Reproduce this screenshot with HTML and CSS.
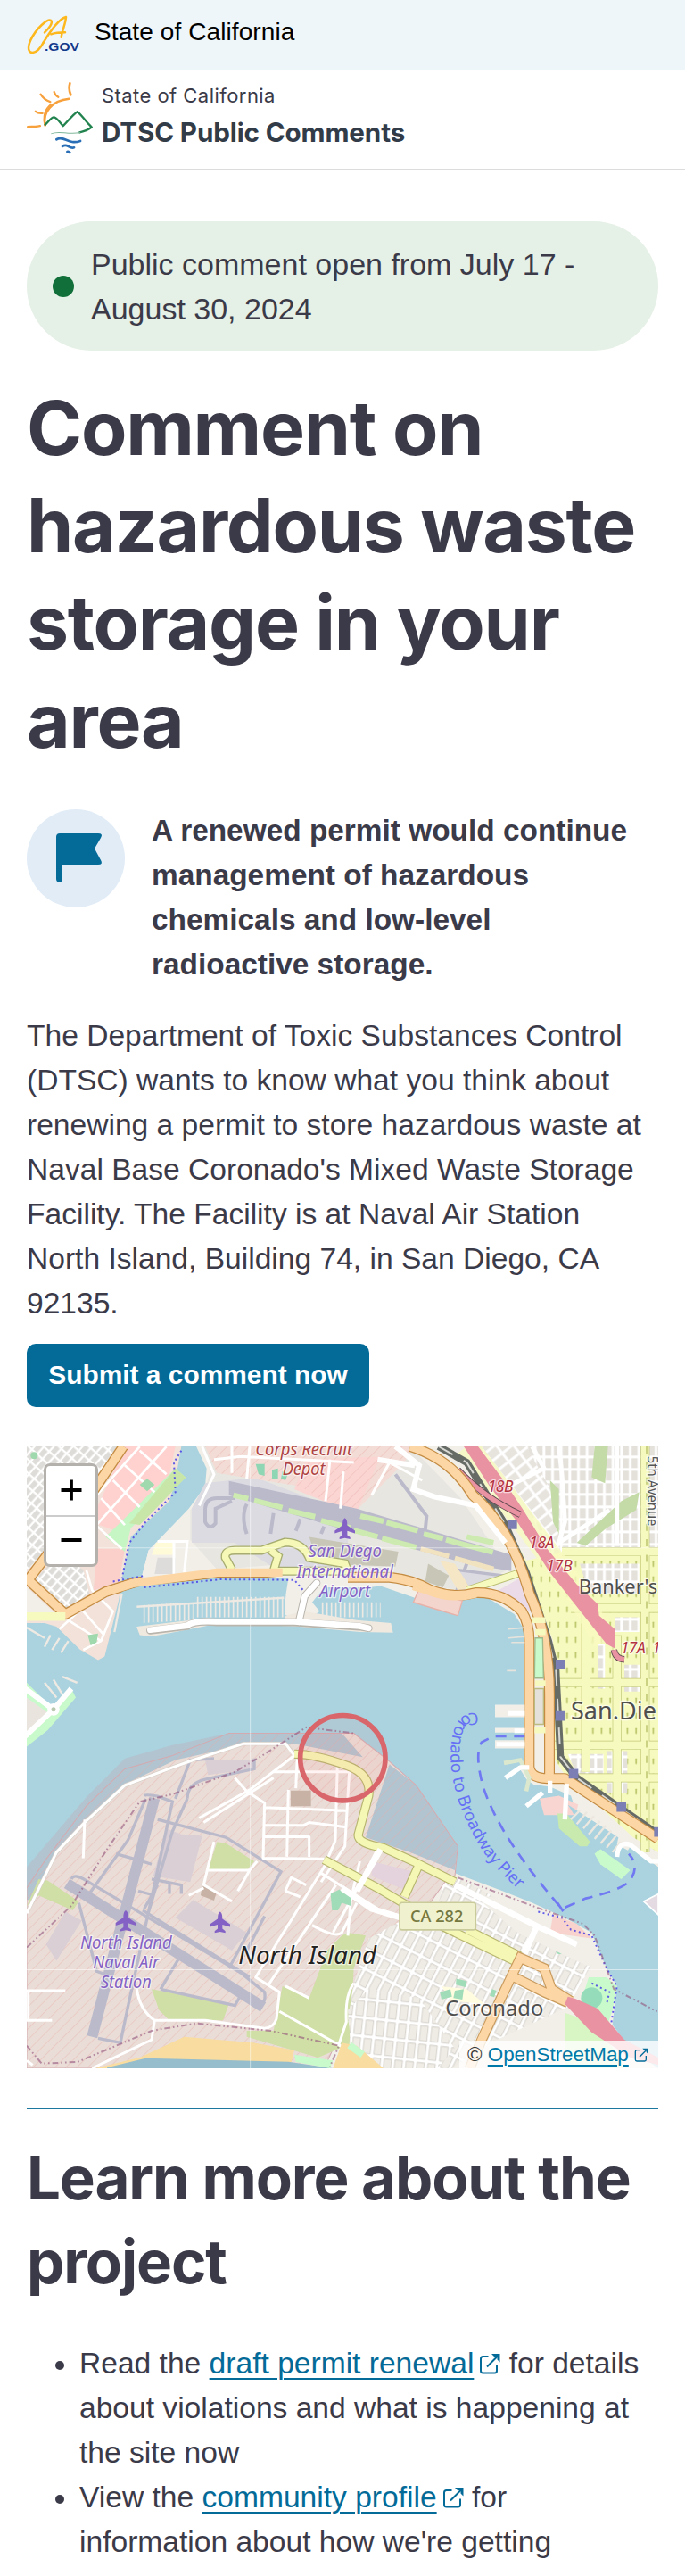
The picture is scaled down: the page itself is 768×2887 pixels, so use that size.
FILE: index.html
```html
<!DOCTYPE html>
<html lang="en">
<head>
<meta charset="utf-8">
<title>DTSC Public Comments</title>
<link rel="stylesheet" href="styles.css">
</head>
<body>
<svg class="defs" width="0" height="0" aria-hidden="true">
  <symbol id="ext" viewBox="0 0 24 24">
    <path d="M10.500 4H4.500Q2 4 2 6.500V20Q2 22.500 4.500 22.500H17.500Q20 22.500 20 20V13.500M9 15.500L21 3.500" fill="none" stroke="currentColor" stroke-width="2"/>
    <path d="M14 1H23.500V10.500L20.500 7.500V4H17Z" fill="currentColor"/>
  </symbol>
</svg>
<div class="state-bar">
  <svg class="ca-logo" viewBox="90 45 180 138" aria-label="CA.gov">
    <g fill="none" stroke="#fdb81e" stroke-width="7.500" stroke-linecap="round" stroke-linejoin="round">
      <path d="M150 106C166 92 178 74 172 66C160 58 122 92 103 132C92 156 94 174 110 174C126 173 138 155 146 140"/>
      <path d="M146 140C170 100 200 60 222 54C221 75 210 96 206 122M172 112C186 107 204 106 219 106"/>
    </g>
    <text x="150" y="167" class="gov" textLength="117" lengthAdjust="spacingAndGlyphs">.GOV</text>
  </svg>
  <span>State of California</span>
</div>
<header class="site-header">
  <svg class="site-logo" viewBox="88 280 226 245" aria-hidden="true">
    <g fill="none" stroke="#f7a13d" stroke-linecap="round">
      <path d="M152 425C142 380 175 342 232 336" stroke-width="8"/>
      <path d="M152 425C144 396 152 370 172 354" stroke-width="5"/>
      <path d="M235 284C231 298 232 310 238 323" stroke-width="8"/>
      <path d="M182 313C184 320 188 326 196 330M137 321C145 334 154 342 169 346M120 378C128 385 134 385 143 384" stroke-width="7"/>
      <path d="M94 430C110 427 120 432 135 427" stroke-width="7"/>
    </g>
    <path d="M150 425C165 412 173 395 183 398C194 402 203 417 212 427C226 414 245 388 260 379C278 394 290 415 308 431C296 440 283 445 265 449" fill="none" stroke="#22834f" stroke-width="7" stroke-linejoin="round"/>
    <path d="M172 453C200 440 225 458 270 449" fill="none" stroke="#7fb79a" stroke-width="3"/>
    <g fill="none" stroke="#2a6fb5" stroke-width="8" stroke-linecap="round">
      <path d="M190 472C215 457 230 492 270 477"/>
      <path d="M210 495C226 482 232 505 249 499"/>
      <path d="M226 513C232 511 232 516 235 516"/>
    </g>
  </svg>
  <div class="site-name"><span class="site-state">State of California</span><strong>DTSC Public Comments</strong></div>
</header>
<main>
  <div class="status"><i class="dot"></i><span>Public comment open from July 17 -<br>August 30, 2024</span></div>
  <h1>Comment on hazardous waste storage in your area</h1>
  <div class="callout">
    <svg class="flag" viewBox="0 0 110 110" aria-hidden="true">
      <circle cx="55" cy="55" r="55" fill="#e1ecf7"/>
      <path d="M33 31Q33 27 37 27H80Q86 27 83 32L76 44L83 57Q86 62 80 62H40V78Q40 81.500 36.500 81.500Q33 81.500 33 78Z" fill="#046b99"/>
    </svg>
    <p>A renewed permit would continue management of hazardous chemicals and low-level radioactive storage.</p>
  </div>
  <p class="intro">The Department of Toxic Substances Control (DTSC) wants to know what you think about renewing a permit to store hazardous waste at Naval Base Coronado's Mixed Waste Storage Facility. The Facility is at Naval Air Station North Island, Building 74, in San Diego, CA 92135.</p>
  <a class="button">Submit a comment now</a>
  <div class="map">
    <svg class="map-art" viewBox="0 6 2124 2090" preserveAspectRatio="none" aria-label="Map of San Diego Bay">
      <defs>
        <pattern id="blocks" width="34" height="24" patternUnits="userSpaceOnUse" patternTransform="rotate(-48)"><rect width="34" height="24" fill="#fff"/><rect x="3" y="3" width="27" height="17" fill="#dedcd8"/></pattern>
        <pattern id="hill" width="29" height="42" patternUnits="userSpaceOnUse"><rect width="29" height="42" fill="#fff"/><rect x="4" y="4" width="20" height="33" fill="#e4e0da"/></pattern>
        <pattern id="hill2" width="36" height="46" patternUnits="userSpaceOnUse" patternTransform="rotate(52)"><rect width="36" height="46" fill="#fff"/><rect x="4" y="4" width="27" height="37" fill="#e7e3dd"/></pattern>
        <pattern id="down" width="29" height="51" patternUnits="userSpaceOnUse" patternTransform="translate(10 18)"><rect width="29" height="51" fill="#f7fabf"/><rect x="7" y="16" width="5" height="20" rx="2" fill="#b9c467"/></pattern>
        <pattern id="cor" width="37" height="62" patternUnits="userSpaceOnUse" patternTransform="rotate(27)"><rect width="37" height="62" fill="#fff"/><rect x="4" y="4" width="28" height="53" rx="3" fill="#d6d2cc"/><rect x="7" y="7" width="22" height="47" fill="#efebe5"/></pattern>
        <pattern id="cor2" width="37" height="62" patternUnits="userSpaceOnUse" patternTransform="rotate(6)"><rect width="37" height="62" fill="#fff"/><rect x="4" y="4" width="28" height="53" rx="3" fill="#d6d2cc"/><rect x="7" y="7" width="22" height="47" fill="#efebe5"/></pattern>
        <pattern id="hatch" width="26" height="26" patternUnits="userSpaceOnUse" patternTransform="rotate(45)"><path d="M13 0V26" stroke="#e8a9a4" stroke-width="3" opacity=".38"/></pattern>
        <pattern id="slips" width="15" height="60" patternUnits="userSpaceOnUse"><path d="M5 0V60" stroke="#eee9e2" stroke-width="5"/></pattern>
      </defs>
      <rect y="6" width="2124" height="2090" fill="#aad3df"/>

      <path d="M0 6H520L500 120L480 190L350 310L320 450L310 520L262 712L240 724L180 690L100 612L60 600H0Z" fill="#f2e2d9"/>
      <path d="M0 6H310L215 180L130 330L0 420Z" fill="url(#blocks)"/>
      <path d="M20 460L110 370L190 420L210 500L130 560Z" fill="url(#blocks)"/>
      <path d="M0 480L110 580H0Z" fill="#f2efe9"/>
      <path d="M330 6H500L480 100L300 290L215 260Z" fill="#ffd2d0"/>
      <path d="M235 350L330 350L310 460L225 490Z" fill="#fbcfca"/>
      <path d="M500 80L535 110L350 280L330 360L265 310Z" fill="#c6f6c4"/>
      <path d="M500 80L535 110L430 220L380 270L345 265Z" fill="#c8e6a8"/>
      <g fill="none" stroke="#fff" stroke-width="8"><path d="M470 6L235 270M380 6L200 210M250 180L330 270M290 120L380 210M330 70L430 160M380 20L470 100M210 250L320 350M200 420L220 490L290 560L250 660L190 690M110 620L240 500M140 590L250 660M190 560L260 640"/></g>
      <g fill="#a0d9ae"><path d="M380 135l25-20 25 20-25 22zM205 640l35-5-5 30-20 10z"/><circle cx="25" cy="37" r="12"/></g>
      <g fill="none" stroke-linejoin="round"><path d="M325 6L160 250L5 455L130 570L265 495L360 465L640 430H1080" stroke="#c48c43" stroke-width="36"/><path d="M325 6L160 250L5 455L130 570L265 495L360 465L640 430H1080" stroke="#fcd6a4" stroke-width="28"/><path d="M0 578H130" stroke="#f7fabf" stroke-width="28"/></g>

      <path d="M570 6L605 80L600 140L545 215L410 355L385 452L640 430L880 450L872 500L865 570L930 600L985 560L960 530L1000 480H1150L1190 475L1320 520L1550 515L1640 570L1685 640V1100L1605 1070L1715 1150L1780 1170L1860 1270L1960 1330L2124 1420V6Z" fill="#f2efe9"/>
      <path d="M365 600L420 588L530 590L600 575H870L930 560L1110 590L1225 600L1232 632L1120 630L900 610L640 602L540 622L420 645L380 640Z" fill="#efe9e0"/>
      <path d="M590 6H1290L1460 180L1620 420L1480 490L1180 460L880 400L640 420L550 320L550 220L600 150L620 80Z" fill="#e8e6e1"/>
      <path d="M600 130L770 110L1080 230V420H840L700 330H555V215Z" fill="#dcdbe2"/>
      <path d="M600 6H1300L1270 60L1090 240L920 140L640 95Z" fill="#f3dcd5"/>
      <path d="M940 50L1190 40L1110 225L1060 215L900 150Z" fill="#fad5d2"/>
      <path d="M600 6H1300L1270 60L1090 240L920 140L640 95Z" fill="url(#hatch)"/>
      <path d="M770 65h30v40l-20-5zM825 85l20-5v35h-20zM860 90l20 5-10 25-15-5z" fill="#8fd6b5"/>
      <path d="M680 122L1110 215L1630 370V425L1480 400L1080 290L680 170Z" fill="#bbbacb"/>
      <g fill="none" stroke="#bbbacb" stroke-width="12"><path d="M700 180H640Q600 180 600 220V260Q615 290 635 265V215L690 190M740 200Q720 240 740 300M830 230L820 300M920 250L905 290M1000 275L990 300M1240 100L1345 240L1340 290M1480 400L1440 510"/></g>
      <path d="M1440 420L1500 500L1600 440Z" fill="#dcdbe2" stroke="#bbbacb" stroke-width="10"/>
      <g stroke="#cdebb0" stroke-width="18"><path d="M695 170L745 182M765 188L860 212M880 222L970 242M990 255L1090 280M1122 240L1200 258M1210 262L1315 290M1335 300L1400 316M1410 320L1568 362M1100 288L1180 310M1195 315L1310 345M1480 310L1570 330"/></g>
      <path d="M1325 350L1420 375M1440 382L1570 418" stroke="#f2e3c0" stroke-width="16"/>
      <path d="M950 310L1250 360L1240 410L980 400ZM1350 400L1420 440L1400 480L1340 460Z" fill="#c8c7b7"/>
      <path d="M1390 390L1440 400L1490 480L1450 490Z" fill="#f5e6c5"/>
      <path d="M690 420L668 380Q665 355 700 355H790L870 328Q930 330 950 380L1070 400L1080 425H830L845 375L820 355" fill="none" stroke="#a7ad70" stroke-width="30"/><path d="M690 420L668 380Q665 355 700 355H790L870 328Q930 330 950 380L1070 400L1080 425H830L845 375L820 355" fill="none" stroke="#f5f8b6" stroke-width="22"/>
      <path d="M400 480L385 450L410 355L440 325H540L520 430Z" fill="#f2efe9"/><path d="M435 330h60v40h-75z" fill="#fffbd8"/><path d="M440 380h60v55h-70z" fill="#dddcda"/>
      <g fill="none" stroke="#fff" stroke-width="9"><path d="M440 325H540L530 430M495 330V435M590 6L630 100L580 205M630 50L720 40L1100 60M690 6V95M750 6L740 115M1020 50L1005 190M1065 90L1055 215M1160 170L1220 60L1330 120"/></g>
      <path d="M385 475L640 450H850L870 480V600L550 590L380 610L320 620V495Z" fill="#aad3df"/>
      <path d="M265 495L360 465L640 430H860" fill="none" stroke="#fcd6a4" stroke-width="28"/>
      <path d="M385 540L560 530V590L385 600ZM570 512H865V580H570Z" fill="url(#slips)"/><path d="M985 530H1190V580H985Z" fill="url(#slips)"/>
      <g fill="none" stroke="#eee9e2" stroke-width="7"><path d="M320 500L295 630M0 615L60 650M80 640L60 680M110 650L85 690M140 660L115 700M370 545L865 515M60 800L100 850M90 790L120 840M120 780L170 800"/></g>
      <g fill="none" stroke="#b9b5ad" stroke-width="26" stroke-linecap="round"><path d="M415 625L540 610Q560 590 640 597H900L1120 612L1150 617M915 597L935 510L975 465"/></g>
      <g fill="none" stroke="#fff" stroke-width="20" stroke-linecap="round"><path d="M415 623L540 608Q560 590 640 595H900L1120 610L1150 617M915 597L935 510L975 465"/></g>

      <path d="M0 800L90 890L150 820L165 850L70 960L0 1015Z" fill="#c8facc"/><path d="M0 850L70 900L0 970Z" fill="#e9e5de"/><path d="M-5 820L90 890L150 820M90 890L-5 980" fill="none" stroke="#fff" stroke-width="18"/><circle cx="90" cy="890" r="14" fill="#b8c9b0" stroke="#fff" stroke-width="13"/>

      <path d="M1500 6H2124V520H1850L1620 100Z" fill="url(#hill)"/>
      <path d="M1530 6H1680L1790 200L1790 360L1640 150Z" fill="url(#hill2)"/>
      <g fill="#c4dba8"><path d="M1760 120L1790 150V300L1770 260ZM1910 6H1955L1945 130L1900 110ZM2000 190L2060 160L2050 220L1950 280L1880 340L1850 330Z"/></g>
      <path d="M1790 6L1800 100L1810 260L1790 330L1960 220M1700 6L1740 80L1640 130M1985 6V340" fill="none" stroke="#fff" stroke-width="15"/>
      <path d="M1600 240L1680 390L1850 350H2124V1370L2040 1320L1810 1110L1770 1050V660L1690 440Z" fill="url(#down)"/>
      <g fill="url(#hill)"><path d="M1860 400H2060V500H1890ZM1980 580H2060V630H1980ZM1920 670H1945V820H1920ZM2010 740H2065V830H2010ZM1950 1030H2020V1170H1950ZM1820 1040H1940V1110H1850Z"/></g>
      <path d="M2080 6V1370M1985 640V1200M1830 550H2124M1800 360H2124M1770 800H2124M1750 1010H2124M1820 1120H2124M1880 520V1100" fill="none" stroke="#c0c775" stroke-width="30"/><path d="M2080 6V1370M1985 640V1200M1830 550H2124M1800 360H2124M1770 800H2124M1750 1010H2124M1820 1120H2124M1880 520V1100" fill="none" stroke="#f7fabf" stroke-width="26"/>
      <path d="M2085 6V1370" stroke="#c3cb78" stroke-width="5" stroke-dasharray="24 28"/>
      <path d="M1585 490L1665 445L1705 570Z" fill="#ebdbe8"/>
      <path d="M1480 490L1660 430" stroke="#b8be72" stroke-width="27"/><path d="M1480 490L1660 430" stroke="#f7fabf" stroke-width="21"/>
      <path d="M1480 6L1840 480L1945 660" fill="none" stroke="#f7fabf" stroke-width="80" opacity=".8"/>
      <path d="M1385 6L1480 60L1610 270L1680 430L1755 660L1780 760L1795 1050L1850 1120L2124 1310" fill="none" stroke="#666b66" stroke-width="24"/><path d="M1385 6L1480 60L1610 270L1680 430L1755 660L1780 760L1795 1050L1850 1120L2124 1310" fill="none" stroke="#d9dad5" stroke-width="6" stroke-dasharray="55 42"/>
      <path d="M1470 6H1518L1600 115L1670 220L1750 350L1850 470L1920 535L1925 575L1978 620V685L1950 670L1870 570L1760 430L1650 260L1560 145Z" fill="#e892a2"/>
      <path d="M1450 85Q1540 180 1660 235M1975 690Q1980 720 2010 722" fill="none" stroke="#5f4a50" stroke-width="22"/><path d="M1450 85Q1540 180 1660 235M1975 690Q1980 720 2010 722" fill="none" stroke="#e892a2" stroke-width="17"/>
      <g fill="none" stroke-linejoin="round"><path d="M1080 446H1220Q1300 455 1350 485Q1430 520 1510 498Q1600 495 1665 560Q1690 600 1690 660V1080Q1690 1120 1750 1122H1810L2124 1325M1290 6Q1430 50 1500 170Q1630 280 1690 500Q1760 650 1758 850V1110" stroke="#c48c43" stroke-width="36"/><path d="M1080 446H1220Q1300 455 1350 485Q1430 520 1510 498Q1600 495 1665 560Q1690 600 1690 660V1080Q1690 1120 1750 1122H1810L2124 1325M1290 6Q1430 50 1500 170Q1630 280 1690 500Q1760 650 1758 850V1110" stroke="#fcd6a4" stroke-width="29"/></g>
      <path d="M1240 6L1320 70L1300 150L1370 175L1510 205L1610 330M1305 70L1180 50" fill="none" stroke="#fff" stroke-width="18"/>
      <g stroke="#f7fabf" stroke-width="20"><path d="M1700 590H1745M1710 630H1745M1710 802H1745M1708 960H1745"/></g>
      <path d="M1710 650H1735L1738 785H1708Z" fill="#c8facc" stroke="#9fb98b" stroke-width="4"/><path d="M1708 820h30v120h-30z" fill="#e4e1da" stroke="#bdbc80" stroke-width="4"/>
      <path d="M1320 485L1465 525L1450 575L1300 530Z" fill="#f3d5ce" stroke="#e7b1a8" stroke-width="4"/>
      <path d="M1300 475L1350 490Q1430 522 1510 500" fill="none" stroke="#fcd6a4" stroke-width="29"/>
      <g stroke="#f2efe9"><path d="M1575 895H1675" stroke-width="42"/><path d="M1575 960H1675" stroke-width="16"/><path d="M1575 1007H1675" stroke-width="28"/></g><path d="M1620 903H1675M1640 962H1675M1580 1007H1675" stroke="#fff" stroke-width="15"/><path d="M1620 620L1675 615M1620 650L1675 645M1630 665L1675 665M1615 760H1645" stroke="#e6e3dd" stroke-width="5"/>
      <g fill="#7b7fb3"><path d="M1617 252h32v32h-32zM1779 723h32v32h-32zM1779 896h32v32h-32zM1823 1090h32v32h-32zM1984 1202h32v32h-32zM2110 1286h14v32h-14z"/></g>

      <path d="M1605 1070L1640 1060L1690 1140L1760 1150L1830 1180L1860 1270L1960 1340L1880 1450L1780 1340L1790 1240L1720 1230L1700 1150Z" fill="#aad3df"/>
      <path d="M1725 1190L1790 1180L1855 1210L1845 1245H1740Z" fill="#f8d5d0"/><path d="M1785 1240L1815 1240L1895 1335L1885 1350L1860 1350L1790 1290Z" fill="#c8eaae"/><path d="M1910 1375L1930 1360L2020 1430L2000 1460L1930 1410Z" fill="#c8facc"/>
      <path d="M1605 1070L1660 1060L1690 1120L1680 1165" fill="none" stroke="#dbe8cd" stroke-width="14"/>
      <path d="M1820 1210L1990 1320L1975 1390L1900 1340Z" fill="#aad3df"/>
      <g stroke="#ece7df" stroke-width="7"><path d="M1830 1260l30-30M1850 1275l34-40M1872 1290l36-42M1890 1310l38-45M1910 1325l38-45M1930 1340l36-43M1950 1355l32-40M1970 1370l28-35"/></g>
      <path d="M2000 1400L2030 1350L2124 1420V1560H2000Z" fill="#aad3df"/>
      <path d="M1910 1375L1930 1360L2030 1430L2000 1460L1930 1410Z" fill="#c8facc"/>
      <path d="M1610 1120L1660 1085H1690M1760 1130V1170M1735 1170L1680 1215M1816 1140L1810 1260M1985 1385Q1990 1330 2030 1345L2100 1400H2124" fill="none" stroke="#fff" stroke-width="16" stroke-linejoin="round"/>
      <path d="M2075 1535L2124 1510V1580Z" fill="#e3dbe1" stroke="#fff" stroke-width="5"/>

      <path d="M0 1490L60 1400L200 1215L330 1090L490 1045L680 970H1100L1220 1065L1310 1145L1450 1350L1440 1440L1600 1500L1700 1540L1810 1590L1900 1640L1950 1760L1985 1820L1970 1950L2030 2030L2124 2096H0Z" fill="#f2efe9"/>
      <path d="M0 1490L60 1400L200 1215L330 1090L490 1045L680 970H1100L1220 1065L1310 1145L1450 1350L1440 1450L1410 1465L1250 1690L1160 1880L1040 2010L1000 2096H0Z" fill="#eaddd7"/>
      <path d="M1220 1075L1310 1145L1450 1350L1440 1430L1290 1370L1140 1320ZM0 1420L200 1185L330 1055L490 1010L680 970H1060L1130 1050L900 1005L730 1010L500 1060L330 1142L200 1260L100 1380L10 1530H0Z" fill="#b2c4d0"/>
      <path d="M0 1490L60 1400L200 1215L330 1090L490 1045L680 970H1100L1220 1065L1310 1145L1450 1350L1440 1450L1410 1465L1250 1690L1160 1880L1040 2010L1000 2096H0Z" fill="url(#hatch)" stroke="#d3aab0" stroke-width="3"/>
      <path d="M0 1550L40 1460L70 1465L175 1535L155 1565L40 1515ZM640 1335L670 1340L765 1400L740 1430H610ZM420 1830L680 1880L660 1935H480L445 1900Z" fill="#cfdfa5"/>
      <path d="M1080 1640L1140 1650L1100 1760L1085 2015L980 2060L740 1990V1970H830L860 1820L950 1860L1010 1700L1060 1650Z" fill="#cfdfa5"/>
      <path d="M470 1290L520 1310L590 1315L550 1470L425 1450ZM560 1530L740 1640L690 1700L500 1590ZM600 1060H770V1090L610 1110ZM130 1570L185 1600L100 1735L65 1680Z" fill="#dacfd5"/>
      <path d="M1160 1400L1320 1440L1280 1500L1160 1450Z" fill="#e4d2dc"/>
      <path d="M888 1163H956V1215H888ZM590 1480L638 1505L630 1532L585 1515Z" fill="#c7b2a5"/>
      <g stroke="#bbbacb" fill="none"><path d="M430 1188L335 1550L220 1990" stroke-width="36"/><path d="M135 1475L795 1890" stroke-width="36"/><g stroke-width="10"><path d="M395 1180Q400 1175 440 1182L490 1200L340 1890L315 2010L240 1995M540 1190L490 1300L410 1570M400 1190L340 1330L210 1510M500 1190L550 1060L630 1055M540 1190Q540 1140 600 1125L765 1090V1055M440 1260L670 1320L855 1435L680 1760M150 1460Q160 1440 200 1465L720 1775L800 1840Q805 1870 790 1880M390 1565L750 1790M300 1375L370 1395L420 1410M175 1540L235 1770L290 1790M450 1830L510 1730M450 1830L700 1885L720 1850M800 1585L730 1720M420 1460L520 1480V1510M480 1475V1510M375 1500L430 1515M440 1480L395 1560"/></g></g>
      <g fill="none" stroke="#d8d0c9" stroke-width="13" stroke-linejoin="round"><path d="M0 1575L100 1370L200 1265L330 1145L490 1085L560 1060L730 1005H870L900 1040"/></g>
      <g fill="none" stroke="#fff" stroke-width="9" stroke-linejoin="round"><path d="M0 1575L100 1370L200 1265L330 1145L490 1085L560 1060L730 1005H870L900 1045L750 1160L580 1255M595 1270L830 1120M195 1260L190 1390M700 1120L740 1165L800 1205L795 1390L1000 1392M880 1160L875 1385M830 1100H1100M800 1220L1080 1230M800 1280H930L950 1270L1070 1285M800 1318H950V1385M910 1050L905 1155M1045 1070L1038 1330L1000 1420M1085 1100L1070 1350L990 1470M1000 1420L770 1790L850 1840L840 1930Q830 1960 800 1962L600 1935H430Q380 1900 370 1830M1040 1480L810 1820M990 1440L1180 1560M1110 1540L1060 1640Q1040 1660 960 1615M870 1500L920 1520M870 1500L890 1455L940 1480M430 1935L420 2000L220 2096M850 1905L1090 2040M630 1335L595 1480L690 1535M605 1430H750L775 1400M750 1430L710 1500M595 1490L545 1515M0 1835H130M0 1935H85M5 1835V1935M1100 1810Q1070 1850 1075 1940L1050 2015M0 2070L20 2085M870 1820L950 1860M1120 1400L1090 1530L1030 1640M1180 1360L1090 1530L1080 1650"/></g>

      <path d="M1400 1480L1440 1450L1880 1680L1910 1730L1820 1890L1560 2010L1430 2096H1200L1100 2020L1080 1930L1100 1810L1150 1660L1260 1600L1370 1600Z" fill="url(#cor)"/>
      <path d="M1150 1830L1320 1860L1440 2030L1380 2096H1160L1090 2020L1080 1900Z" fill="url(#cor2)"/>
      <path d="M1060 2010L1110 2020L1200 2096H1030ZM380 2060L530 1990L760 2010L900 2035L890 2075L400 2070L270 2096H230Z" fill="#f9dc9f"/><path d="M270 2094L400 2062L880 2074L1030 2096H270Z" fill="#95bdcb"/>
      <path d="M900 2050L1030 2070L1020 2096L905 2075Z" fill="#c8facc"/>
      <path d="M1085 2018L1130 2050" stroke="#c8facc" stroke-width="24"/>
      <path d="M1395 1820L1480 1830L1540 1880L1430 1870Z" fill="#fffce0"/><g fill="#a0dcb8"><path d="M1390 1840l35-10 5 25-35 10zM1440 1835l30-5-5 35-30-5zM1565 1830l15 5-8 22-15-5z"/><circle cx="1792" cy="1700" r="12"/><path d="M1445 1795l35 8-5 20-32-8zM1022 1510l30-15 20 20-25 50h-20zM1055 1500l35 15v35l-30-10z"/></g>
      <path d="M1500 1510L1620 1530L1760 1600L1900 1650L1950 1760L1880 1750L1650 1640Z" fill="#f2efe9"/><path d="M1770 1580L1850 1610L1900 1660L1760 1640Z" fill="#f8d2cd"/>
      <path d="M1890 1790L1950 1790L1985 1820L1970 1900L1950 1960L1865 1870Z" fill="#c8facc"/><circle cx="1900" cy="1860" r="36" fill="#95ddba"/><path d="M1812 1910L1900 1940L1990 2050L2010 2096H1810Z" fill="#d8f5c4"/>
      <g fill="none" stroke-linejoin="round"><path d="M900 1040Q970 1040 1080 1080Q1160 1110 1150 1180L1115 1310Q1110 1340 1200 1355L1310 1405L1440 1470M1000 1395L1180 1490L1400 1620L1640 1735M1320 1410L1270 1520M1480 1630L1660 1720" stroke="#b7b670" stroke-width="31"/><path d="M900 1040Q970 1040 1080 1080Q1160 1110 1150 1180L1115 1310Q1110 1340 1200 1355L1310 1405L1440 1470M1000 1395L1180 1490L1400 1620L1640 1735M1320 1410L1270 1520M1480 1630L1660 1720" stroke="#f5f7b5" stroke-width="24"/></g>
      <path d="M1440 1480L1720 1620L1850 1680M1715 1620L1675 1710M1060 1490L1160 1560L1260 1590M1190 1360L1110 1500" fill="none" stroke="#fff" stroke-width="20"/>
      <g fill="none"><path d="M1490 2096L1530 2000L1600 1850L1660 1725L1740 1760L1765 1830L1830 1870M1620 1780L1740 1840L1820 1875" stroke="#c99b5d" stroke-width="35"/><path d="M1490 2096L1530 2000L1600 1850L1660 1725L1740 1760L1765 1830L1830 1870M1620 1780L1740 1840L1820 1875" stroke="#fcd6a4" stroke-width="28"/></g>
      <path d="M1810 1880L1820 1855L1845 1862L1920 1895L2010 2000L2124 2060V2085L2030 2060L1900 1975Z" fill="#e892a2"/>
      <g fill="none" stroke="#463fe8" stroke-width="6" stroke-dasharray="6 10" opacity=".85"><path d="M520 20L495 60L500 160L400 260L345 330L320 450M290 460L400 440M395 480L650 453L900 455L930 490M1720 1570L1800 1590L1830 1630L1900 1650L1950 1760L1985 1820L1965 1950M1900 1810L1960 1840L1950 1880"/></g>
      <path d="M0 1690L150 1550L270 1360L380 1200L490 1175L700 1100L800 1040L940 950L1100 970M0 2020L50 2080L170 2075L420 1970L570 1945L820 1970L1050 2020L1020 2090M1450 1455L1700 1550L1870 1610L1910 1650L1975 1830L2120 1905" fill="none" stroke="#92547b" stroke-width="6" stroke-dasharray="20 9 5 9 5 9" opacity=".6"/>
      <path d="M1675 980H1570L1530 1000Q1505 1040 1535 1150Q1590 1320 1800 1560L1880 1525Q1990 1500 2025 1470Q2065 1420 2025 1375M1785 1540L1802 1565L1825 1545" fill="none" stroke="#7078f2" stroke-width="8" stroke-dasharray="36 26"/>
      <g fill="none" stroke="#fff" stroke-width="3" opacity=".5"><path d="M0 347H2124M752 6V2096M0 1765H2124"/></g>
      <circle cx="1063" cy="1053" r="143" fill="#ff6b6b" fill-opacity=".08" stroke="#d9666b" stroke-width="17"/>
      <path id="ferry" d="M1518 902C1450 896 1428 950 1425 1045C1427 1180 1500 1330 1560 1400C1610 1460 1660 1500 1710 1540" fill="none"/>
      <text class="lbl ferry"><textPath href="#ferry" textLength="715">Coronado to Broadway Pier</textPath></text>
      <g class="lbl mil"><text x="932" y="37" textLength="326" lengthAdjust="spacingAndGlyphs">Corps Recruit</text><text x="932" y="103" textLength="143" lengthAdjust="spacingAndGlyphs">Depot</text></g>
      <g class="lbl air"><text x="1070" y="379" textLength="247" lengthAdjust="spacingAndGlyphs">San Diego</text><text x="1070" y="447" textLength="325" lengthAdjust="spacingAndGlyphs">International</text><text x="1070" y="512" textLength="170" lengthAdjust="spacingAndGlyphs">Airport</text><text x="334" y="1695" textLength="308" lengthAdjust="spacingAndGlyphs">North Island</text><text x="334" y="1761" textLength="222" lengthAdjust="spacingAndGlyphs">Naval Air</text><text x="334" y="1827" textLength="170" lengthAdjust="spacingAndGlyphs">Station</text></g>
      <g fill="#8461c4"><path id="plane" d="M1070 247q8 3 8 24l26 18v9l-26-8v14l10 8v6l-18-4-18 4v-6l10-8v-14l-26 8v-9l26-18q0-21 8-24z"/><use href="#plane" x="-737" y="1318"/><use href="#plane" x="-420" y="1323"/></g>
      <g class="lbl exit"><text x="1550" y="158" textLength="86">18B</text><text x="1690" y="349" textLength="84">18A</text><text x="1747" y="427" textLength="88">17B</text><text x="1997" y="702" textLength="84">17A</text><text x="2104" y="702">1</text></g>
      <g class="lbl place"><text class="bank" x="1856" y="500" textLength="266" lengthAdjust="spacingAndGlyphs">Banker's</text><text class="sd" x="1830" y="923" textLength="288" lengthAdjust="spacingAndGlyphs">San.Die</text><text class="coro" x="1408" y="1918" textLength="330" lengthAdjust="spacingAndGlyphs">Coronado</text></g>
      <text class="lbl north" x="712" y="1744" textLength="464" lengthAdjust="spacingAndGlyphs">North Island</text>
      <text class="lbl avenue" transform="translate(2087 38) rotate(90)" textLength="236" lengthAdjust="spacingAndGlyphs">5th Avenue</text>
      <rect x="1254" y="1539" width="256" height="92" rx="9" fill="#f0f2cf" stroke="#c9cb9b" stroke-width="5"/>
      <text class="ca282" x="1290" y="1605" textLength="178" lengthAdjust="spacingAndGlyphs">CA 282</text>
    </svg>
    <div class="zoom"><span><svg viewBox="0 0 24 24"><path d="M12 0.500V23.500M.5 12H23.500"/></svg></span><span><svg viewBox="0 0 24 24"><path d="M.5 12H23.500"/></svg></span></div>
    <div class="credit">© <a>OpenStreetMap</a><svg class="ext"><use href="#ext"/></svg></div>
  </div>
  <hr>
  <h2>Learn more about the project</h2>
  <ul>
    <li>Read the <a>draft permit renewal</a><svg class="ext"><use href="#ext"/></svg> for details about violations and what is happening at the site now</li>
    <li>View the <a>community profile</a><svg class="ext"><use href="#ext"/></svg> for<br>information about how we're getting</li>
  </ul>
</main>
</body>
</html>
```
FILE: styles.css
```css
* { box-sizing: border-box; }
body { margin: 0; background: #fff; color: #3b3a48; font: 33.6px/50px "Liberation Sans", Arial, sans-serif; }
.defs { display: block; position: absolute; }
p { margin: 0; }
.state-bar { height: 78px; padding: 0 0 4px 30px; display: flex; align-items: center; background: #eef6fa; color: #000; font-size: 28px; letter-spacing: .1px; line-height: 40px; }
.ca-logo { width: 60px; height: 46px; margin: 4px 16px 0 0; }
.state-bar span { margin-top: -2px; }
.gov { font: 700 41px "Liberation Sans", sans-serif; fill: #12388a; }
.site-header { height: 113px; padding: 14px 0 0 29px; display: flex; border-bottom: 2px solid #dcdcdc; }
.site-logo { width: 76px; height: 82px; margin-right: 9px; }
.site-name { display: flex; flex-direction: column; font-family: Inter, sans-serif; }
.site-state { font-size: 22px; line-height: 30px; letter-spacing: .45px; }
.site-name strong { font-size: 29.600px; line-height: 40px; margin-top: 6px; letter-spacing: -.12px; color: #323c48; }
main { padding: 57px 30px 0; }
.status { display: flex; align-items: center; height: 145px; padding-left: 29px; border-radius: 73px; background: #e5f0e6; font-size: 34px; }
.dot { width: 24px; height: 24px; margin-right: 19px; border-radius: 50%; background: #11703a; }
h1, h2 { font-family: Inter, sans-serif; font-weight: 700; }
h1 { margin: 32px 0 44px; font-size: 84px; line-height: 109.200px; letter-spacing: -1.250px; }
.callout { display: flex; align-items: flex-start; font-weight: 700; font-size: 33.400px; }
.flag { width: 110px; height: 110px; margin: 1px 30px 0 0; flex: none; }
.callout p { width: 540px; }
.intro { margin-top: 30px; }
.button { display: flex; align-items: center; justify-content: center; width: 384px; height: 71px; margin-top: 20px; border-radius: 10px; background: #046b99; color: #fff; font-weight: 700; font-size: 29.900px; }
.map { position: relative; height: 697px; margin-top: 44px; overflow: hidden; background: #ddd; }
.map-art { display: block; width: 708px; height: 697px; }
.lbl { font-family: "Noto Sans", sans-serif; paint-order: stroke; stroke: #fff; stroke-opacity: .65; stroke-width: 8px; stroke-linejoin: round; }
.mil, .air { font-size: 57px; font-style: italic; text-anchor: middle; }
.mil { fill: #ad4343; }
.air { fill: #8461c4; }
.ferry { font-size: 56px; fill: #6670f5; stroke: none; }
.exit { font-size: 52px; font-style: italic; fill: #b3323f; }
.place { fill: #4e4e4e; }
.bank { font-size: 66px; }
.sd { font-size: 80px; }
.coro { font-size: 69px; }
.north { font-size: 79px; font-style: italic; fill: #222; }
.avenue { font-size: 46px; fill: #555; }
.ca282 { font: 500 54px "Noto Sans", sans-serif; fill: #75783f; }
.zoom { position: absolute; left: 19px; top: 19px; width: 61px; border: 3px solid #b4b0ac; border-radius: 7px; overflow: hidden; background: #fff; }
.zoom span { display: flex; align-items: center; justify-content: center; height: 55px; }
.zoom span + span { border-top: 2px solid #ccc; }
.zoom svg { width: 24px; height: 24px; stroke: #000; stroke-width: 3.800; }
.credit { position: absolute; right: 0; bottom: 0; width: 223px; height: 31px; padding-left: 9px; white-space: nowrap; background: rgba(255,255,255,.8); color: #333; font-size: 22.400px; line-height: 31px; }
a { color: #046b99; text-decoration: underline; text-decoration-thickness: 2px; text-underline-offset: 5px; }
.button { text-decoration: none; color: #fff; }
.credit a { color: #0078a8; text-underline-offset: 4px; }
.ext { width: 24px; height: 24px; margin-left: 6px; color: #046b99; vertical-align: -1px; }
.credit .ext { width: 16px; height: 16px; vertical-align: -1px; }
hr { height: 2px; margin: 44px 0 30px; border: 0; background: #1c789f; }
h2 { margin: 0 0 41px; font-size: 67.200px; line-height: 94.400px; letter-spacing: -1.120px; }
ul { list-style: none; margin: 0; padding: 0 0 0 59px; font-size: 33.600px; }
li { position: relative; margin-right: -15px; }
li::before { content: ""; position: absolute; left: -27px; top: 22px; width: 10px; height: 10px; border-radius: 50%; background: #3b3a48; }
```
